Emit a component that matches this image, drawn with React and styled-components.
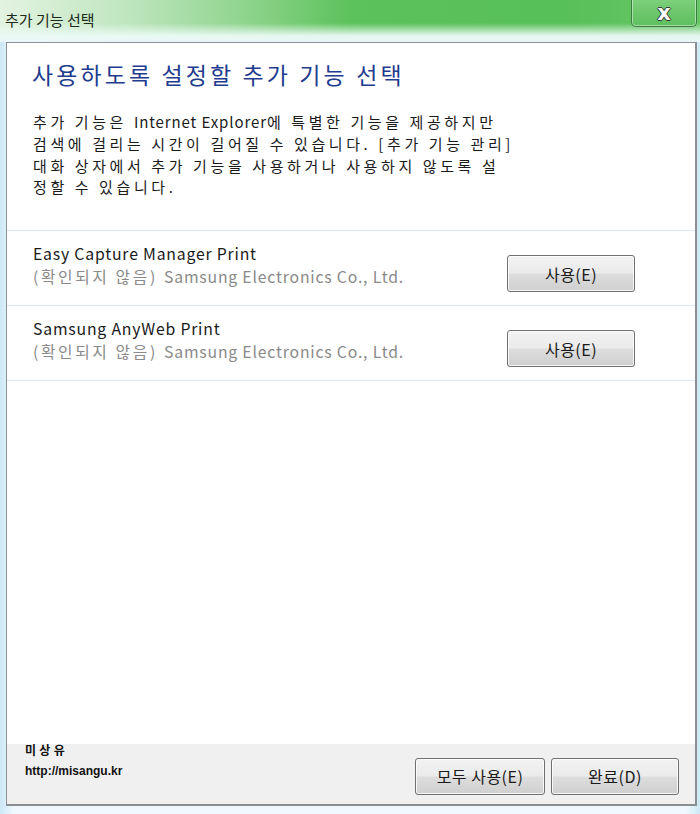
import styled, { createGlobalStyle } from "styled-components";

const GlobalStyle = createGlobalStyle`
  html, body {
    margin: 0;
    padding: 0;
    background: #ffffff;
  }
  body {
    font-family: "Noto Sans CJK KR", "Noto Sans", sans-serif;
  }
`;

const Frame = styled.div`
  display: flex;
  flex-direction: column;
  width: 700px;
  height: 814px;
  box-sizing: border-box;
  padding: 0 3px 8px 6px;
  background:
    linear-gradient(to right, rgba(200, 230, 245, 0.9), rgba(240, 250, 255, 0.6) 2%, rgba(240, 250, 255, 0.6) 98%, rgba(200, 230, 245, 0.9)),
    #eef7fb;
`;

const TitleBar = styled.div`
  position: relative;
  display: flex;
  align-items: center;
  height: 42px;
  margin: 0 -3px 0 -6px;
  padding: 0 5px;
  background:
    linear-gradient(to bottom, rgba(255, 255, 255, 0) 0%, rgba(255, 255, 255, 0) 55%, rgba(235, 250, 245, 0.95) 85%, #eaf6fa 100%),
    linear-gradient(to right, #e3f3e1 0%, #bfe6bf 18%, #8fd48d 35%, #5cc25b 50%, #58c058 80%, #67c667 100%);
`;

const TitleText = styled.span`
  font-size: 15px;
  color: #1b2a1b;
  margin-top: -4px;
`;

const CloseButton = styled.div`
  position: absolute;
  top: -2px;
  right: 3px;
  width: 66px;
  height: 29px;
  box-sizing: border-box;
  border: 1px solid #3f7a43;
  border-top: none;
  border-radius: 0 0 5px 5px;
  box-shadow: inset 0 0 0 1px rgba(255, 255, 255, 0.45);
  background: linear-gradient(to bottom, #7dd07c, #5dbf5d);
  display: flex;
  align-items: center;
  justify-content: center;
  padding-top: 2px;
  font-family: "DejaVu Sans", sans-serif;
  font-weight: bold;
  font-size: 21px;
  color: #ffffff;
  text-shadow: 1px 0 0 #333, -1px 0 0 #333, 0 1px 0 #333, 0 -1px 0 #333;
`;

const Client = styled.div`
  flex: 1;
  display: flex;
  flex-direction: column;
  border: 1px solid #8a8f93;
  border-right-width: 2px;
  border-bottom-width: 2px;
  background: #ffffff;
`;

const Content = styled.div`
  flex: 1;
  padding: 14px 0 0 0;
`;

const Heading = styled.h1`
  margin: 0 0 0 25px;
  font-weight: normal;
  font-size: 23px;
  color: #1f3c8e;
  letter-spacing: 3.1px;
`;

const Description = styled.p`
  margin: 20px 0 0 26px;
  font-size: 15px;
  line-height: 21.8px;
  color: #1a1a1a;
  letter-spacing: 3.6px;
`;

const Latin = styled.span`
  letter-spacing: ${(p) => p.$spacing ?? 0.9}px;
`;

const List = styled.div`
  margin-top: 32px;
  border-top: 1px solid #dde7f0;
`;

const Row = styled.div`
  display: flex;
  align-items: flex-start;
  justify-content: space-between;
  height: 75px;
  padding: 11px 60px 0 26px;
  box-sizing: border-box;
  border-bottom: 1px solid #dde7f0;
`;

const RowInfo = styled.div`
  display: flex;
  flex-direction: column;
`;

const AddonName = styled.span`
  font-size: 15.8px;
  line-height: 23px;
  letter-spacing: 0.8px;
  color: #1a1a1a;
`;

const Publisher = styled.span`
  font-size: 15.8px;
  line-height: 23px;
  letter-spacing: 2.6px;
  color: #8a8a8a;
`;

const Button = styled.button`
  width: ${(p) => p.$width || 128}px;
  height: 37px;
  margin-top: ${(p) => p.$offset || 0}px;
  border: 1px solid #707070;
  border-radius: 3px;
  background: linear-gradient(to bottom, #f2f2f2 0%, #ebebeb 48%, #dddddd 52%, #cfcfcf 100%);
  box-shadow: inset 0 0 0 1px rgba(255, 255, 255, 0.8);
  font-family: "Noto Sans CJK KR", "Noto Sans", sans-serif;
  font-size: 16px;
  letter-spacing: 0.5px;
  color: #1a1a1a;
  padding: 0;
`;

const Footer = styled.div`
  display: flex;
  align-items: center;
  justify-content: space-between;
  height: 60px;
  padding: 0 16px 0 18px;
  background: #f0f0f0;
`;

const Watermark = styled.div`
  display: flex;
  flex-direction: column;
  align-self: flex-start;
  margin-top: -3px;
  font-family: "Liberation Sans", "Noto Sans CJK KR", sans-serif;
  font-weight: bold;
  font-size: 12px;
  line-height: 20px;
  color: #111111;
`;

const ButtonGroup = styled.div`
  display: flex;
  gap: 6px;
  margin-top: 4px;
`;

const addons = [
  { name: "Easy Capture Manager Print" },
  { name: "Samsung AnyWeb Print" },
];

export default function App() {
  return (
    <>
      <GlobalStyle />
      <Frame>
        <TitleBar>
          <TitleText>추가 기능 선택</TitleText>
          <CloseButton>x</CloseButton>
        </TitleBar>
        <Client>
          <Content>
            <Heading>사용하도록 설정할 추가 기능 선택</Heading>
            <Description>
              추가 기능은 <Latin>Internet Explorer</Latin>에 특별한 기능을 제공하지만
              <br />
              검색에 걸리는 시간이 길어질 수 있습니다. [추가 기능 관리]
              <br />
              대화 상자에서 추가 기능을 사용하거나 사용하지 않도록 설
              <br />
              정할 수 있습니다.
            </Description>
            <List>
              {addons.map((a) => (
                <Row key={a.name}>
                  <RowInfo>
                    <AddonName>{a.name}</AddonName>
                    <Publisher>
                      (확인되지 않음) <Latin $spacing={0.8}>Samsung Electronics Co., Ltd.</Latin>
                    </Publisher>
                  </RowInfo>
                  <Button $offset={13}>사용(E)</Button>
                </Row>
              ))}
            </List>
          </Content>
          <Footer>
            <Watermark>
              <span>미 상 유</span>
              <span>http://misangu.kr</span>
            </Watermark>
            <ButtonGroup>
              <Button $width={130}>모두 사용(E)</Button>
              <Button $width={128}>완료(D)</Button>
            </ButtonGroup>
          </Footer>
        </Client>
      </Frame>
    </>
  );
}
